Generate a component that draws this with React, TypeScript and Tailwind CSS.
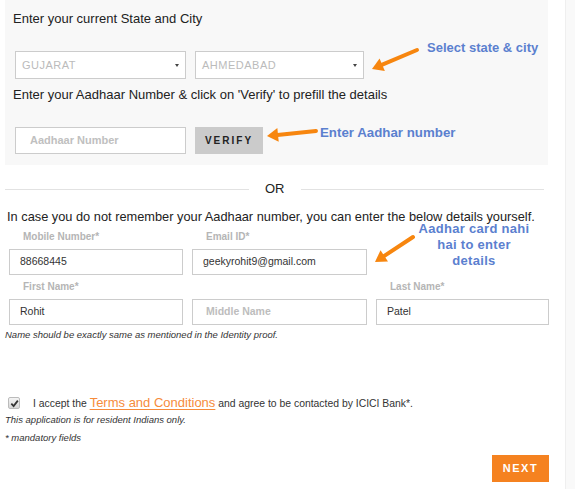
import { useState } from "react";

const font = "font-['Liberation_Sans',Arial,sans-serif]";

function Arrow({ x1, y1, x2, y2 }: { x1: number; y1: number; x2: number; y2: number }) {
  const a = Math.atan2(y2 - y1, x2 - x1);
  const len = 13;
  const w = 0.55;
  const p1 = [x2 - len * Math.cos(a - w), y2 - len * Math.sin(a - w)];
  const p2 = [x2 - len * Math.cos(a + w), y2 - len * Math.sin(a + w)];
  const bx = x2 - 8 * Math.cos(a);
  const by = y2 - 8 * Math.sin(a);
  return (
    <g>
      <line x1={x1} y1={y1} x2={bx} y2={by} stroke="#f7860f" strokeWidth={4} strokeLinecap="round" />
      <polygon points={`${x2},${y2} ${p1[0]},${p1[1]} ${p2[0]},${p2[1]}`} fill="#f7860f" />
    </g>
  );
}

function Caret() {
  return <span className="w-0 h-0 border-l-[2px] border-r-[2px] border-t-[3px] border-l-transparent border-r-transparent border-t-[#444]" />;
}

function Field({ label, value, placeholder, w }: { label?: string; value?: string; placeholder?: string; w: string }) {
  return (
    <div className={`flex flex-col ${w}`}>
      <div className="h-[24px] pl-[14px] pt-[6px] text-[10px] leading-[12px] font-bold text-[#b5b5b5]">{label ?? "\u00a0"}</div>
      <div className="h-[26px] border border-[#cccccc] bg-white pl-[10px] flex items-center text-[10.5px] text-[#333]">
        {value ?? <span className="font-bold text-[#bdbdbd] pl-[3px]">{placeholder}</span>}
      </div>
    </div>
  );
}

export default function App() {
  const [checked, setChecked] = useState(true);

  return (
    <div className={`relative w-[575px] h-[489px] bg-white flex ${font} text-[#222]`}>
      <div className="w-[565px] flex flex-col">
        {/* aadhaar panel */}
        <section className="ml-[5px] w-[543px] h-[165px] bg-[#f8f8f8] flex flex-col">
          <h2 className="ml-[8px] mt-[11px] text-[13px] leading-[16px]">Enter your current State and City</h2>
          <div className="ml-[10px] mt-[24px] flex gap-[9px]">
            <div className="w-[171px] h-[28px] border border-[#cccccc] bg-white flex items-center justify-between pl-[6px] pr-[6px] text-[11px] tracking-[0.5px] text-[#bbbbbb]">
              <span>GUJARAT</span>
              <Caret />
            </div>
            <div className="w-[169px] h-[28px] border border-[#cccccc] bg-white flex items-center justify-between pl-[6px] pr-[6px] text-[11px] tracking-[0.5px] text-[#bbbbbb]">
              <span>AHMEDABAD</span>
              <Caret />
            </div>
          </div>
          <p className="ml-[8px] mt-[8px] text-[13px] leading-[16px]">
            Enter your Aadhaar Number &amp; click on 'Verify' to prefill the details
          </p>
          <div className="ml-[10px] mt-[24px] flex gap-[9px]">
            <div className="w-[171px] h-[27px] border border-[#cccccc] bg-white flex items-center pl-[14px] text-[11px] font-bold text-[#c0c0c0]">
              Aadhaar Number
            </div>
            <button className="w-[68px] h-[27px] bg-[#cbcbcb] text-[10px] font-bold tracking-[2px] text-[#222]">VERIFY</button>
          </div>
        </section>

        {/* OR divider */}
        <div className="mt-[16px] ml-[5px] w-[539px] flex items-center h-[16px]">
          <div className="w-[244px] h-px bg-[#e2e2e2]" />
          <span className="ml-[16px] text-[13px]">OR</span>
          <div className="ml-[16px] flex-1 h-px bg-[#e2e2e2]" />
        </div>

        <p className="ml-[7px] mt-[12px] text-[12.8px] leading-[16px]">
          In case you do not remember your Aadhaar number, you can enter the below details yourself.
        </p>

        <div className="ml-[9px] flex gap-[9px]">
          <Field label="Mobile Number*" value="88668445" w="w-[174px]" />
          <Field label="Email ID*" value="geekyrohit9@gmail.com" w="w-[175px]" />
        </div>
        <div className="ml-[9px] flex gap-[9px]">
          <Field label="First Name*" value="Rohit" w="w-[174px]" />
          <Field placeholder="Middle Name" w="w-[175px]" />
          <Field label="Last Name*" value="Patel" w="w-[173px]" />
        </div>
        <p className="ml-[5px] mt-[4px] text-[9.5px] italic leading-[12px] text-[#333]">
          Name should be exactly same as mentioned in the Identity proof.
        </p>

        {/* terms */}
        <label className="ml-[8px] mt-[55px] flex items-center h-[14px]">
          <span
            onClick={() => setChecked(!checked)}
            className="w-[12px] h-[12px] rounded-[2px] border border-[#bbb] bg-gradient-to-b from-[#f4f4f4] to-[#d6d6d6] flex items-center justify-center"
          >
            {checked && (
              <svg width="9" height="9" viewBox="0 0 10 10">
                <path d="M1.5 5.2 L4 7.8 L8.7 1.8" fill="none" stroke="#333" strokeWidth="2" />
              </svg>
            )}
          </span>
          <span className="ml-[13px] text-[10.4px] text-[#333]">
            I accept the{" "}
            <a className="text-[13px] text-[#f68b3b] underline underline-offset-2">Terms and Conditions</a>{" "}
            and agree to be contacted by ICICI Bank*.
          </span>
        </label>
        <p className="ml-[5px] mt-[4px] text-[9.5px] italic leading-[12px] text-[#333]">
          This application is for resident Indians only.
        </p>
        <p className="ml-[5px] mt-[6px] text-[9.5px] italic leading-[12px] text-[#333]">* mandatory fields</p>

        <div className="mt-[11px] ml-[492px]">
          <button className="w-[57px] h-[27px] bg-[#f58220] text-white text-[11px] font-bold tracking-[1.5px]">NEXT</button>
        </div>
      </div>

      <div className="w-[10px] bg-[#f9f9f9] border-l border-[#efefef]" />

      {/* annotations */}
      <svg className="absolute left-0 top-0 pointer-events-none" width="575" height="489">
        <Arrow x1={417} y1={50} x2={372} y2={69} />
        <Arrow x1={316} y1={131} x2={267} y2={136} />
        <Arrow x1={413} y1={237} x2={375} y2={262} />
      </svg>
      <div className="absolute left-[427px] top-[39px] text-[13px] font-bold text-[#5b80cf] leading-[17px]">Select state &amp; city</div>
      <div className="absolute left-[320px] top-[124px] text-[13.3px] font-bold text-[#5b80cf] leading-[17px]">Enter Aadhar number</div>
      <div className="absolute left-[409px] top-[221px] w-[130px] text-center text-[13px] font-bold text-[#5b80cf] leading-[16px] tracking-[0.3px]">
        Aadhar card nahi
        <br />
        hai to enter
        <br />
        details
      </div>
    </div>
  );
}
